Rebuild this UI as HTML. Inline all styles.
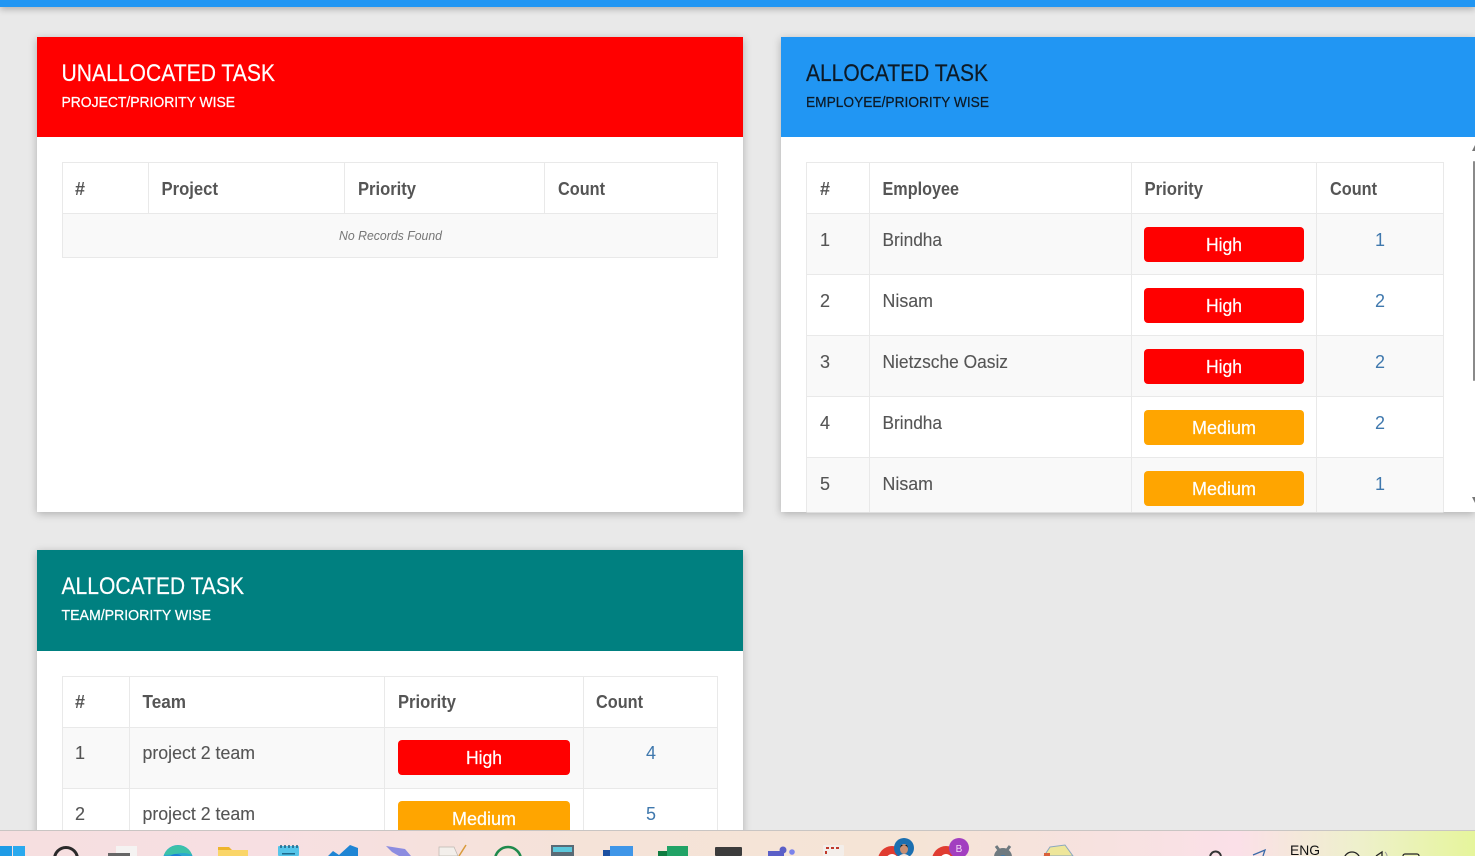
<!DOCTYPE html>
<html>
<head>
<meta charset="utf-8">
<style>
html,body{margin:0;padding:0;width:1475px;height:856px;overflow:hidden;background:#e9e9e9;font-family:"Liberation Sans",sans-serif}
#top{position:absolute;left:0;top:0;width:1475px;height:7px;background:#2196f3;box-shadow:0 2px 7px rgba(0,0,0,.28)}
.card{position:absolute;background:#fff;box-shadow:0 2px 8px rgba(0,0,0,.25)}
#tb{position:absolute;left:0;top:830px;width:1475px;height:26px;border-top:1px solid #c9c5c3;box-sizing:border-box;background:linear-gradient(90deg,#f6dfe0 0%,#f7dfe2 18%,#f5e3d8 40%,#f5e4d6 62%,#f7e2e0 75%,#fbe0e8 84%,#eef0cc 92%,#e6f59c 100%)}
svg{position:absolute;left:0;top:0}
text{font-family:"Liberation Sans",sans-serif}
.th{font-size:18px;font-weight:bold;fill:#555}
.td{font-size:18px;fill:#555;stroke:#555;stroke-width:.12px}
.bt{font-size:18px;fill:#fff;stroke:#fff;stroke-width:.2px}
.lnk{font-size:18px;fill:#3f78ad;text-anchor:middle}
.sub{font-size:15px;stroke-width:.25px}
.ttl{font-size:24.5px;stroke-width:.2px}
</style>
</head>
<body>
<div id="top"></div>
<div class="card" style="left:37px;top:37px;width:706px;height:475px"></div>
<div class="card" style="left:781px;top:37px;width:694px;height:475px"></div>
<div class="card" style="left:37px;top:550px;width:706px;height:290px"></div>

<svg width="1475" height="856" viewBox="0 0 1475 856">
<!-- headers -->
<rect x="37" y="37" width="706" height="100" fill="#ff0000"/>
<rect x="781" y="37" width="694" height="100" fill="#2196f3"/>
<rect x="37" y="550" width="706" height="101" fill="#008080"/>
<g fill="#fff" stroke="#fff">
<text class="ttl" x="61.5" y="81" textLength="213.5" lengthAdjust="spacingAndGlyphs">UNALLOCATED TASK</text>
<text class="sub" x="61.5" y="107" textLength="173.5" lengthAdjust="spacingAndGlyphs">PROJECT/PRIORITY WISE</text>
<text class="ttl" x="61.5" y="594" textLength="182.5" lengthAdjust="spacingAndGlyphs">ALLOCATED TASK</text>
<text class="sub" x="61.5" y="620" textLength="149.5" lengthAdjust="spacingAndGlyphs">TEAM/PRIORITY WISE</text>
</g>
<g fill="#0d1a26" stroke="#0d1a26">
<text class="ttl" x="806" y="81" textLength="182" lengthAdjust="spacingAndGlyphs">ALLOCATED TASK</text>
<text class="sub" x="806" y="107" textLength="183" lengthAdjust="spacingAndGlyphs">EMPLOYEE/PRIORITY WISE</text>
</g>

<!-- table 1 -->
<rect x="62.5" y="213.5" width="655" height="44" fill="#f9f9f9"/>
<g fill="none" stroke="#e9e9e9" stroke-width="1">
<rect x="62.5" y="162.5" width="655" height="95"/>
<path d="M62 213.5H718M148.5 162V213M344.5 162V213M544.5 162V213"/>
</g>
<g>
<text class="th" x="75" y="195" textLength="10" lengthAdjust="spacingAndGlyphs">#</text>
<text class="th" x="161.5" y="195" textLength="56.5" lengthAdjust="spacingAndGlyphs">Project</text>
<text class="th" x="358" y="195" textLength="58" lengthAdjust="spacingAndGlyphs">Priority</text>
<text class="th" x="558" y="195" textLength="47" lengthAdjust="spacingAndGlyphs">Count</text>
</g>
<text x="339" y="240" font-size="13" font-style="italic" fill="#777" textLength="103" lengthAdjust="spacingAndGlyphs">No Records Found</text>

<!-- table 2 -->
<rect x="806.5" y="213.5" width="637" height="61" fill="#f9f9f9"/>
<rect x="806.5" y="335.5" width="637" height="61" fill="#f9f9f9"/>
<rect x="806.5" y="457.5" width="637" height="55" fill="#f9f9f9"/>
<g fill="none" stroke="#e9e9e9" stroke-width="1">
<path d="M806.5 512V162.5H1443.5V512M806 213.5H1444M806 274.5H1444M806 335.5H1444M806 396.5H1444M806 457.5H1444M869.5 162V512M1131.5 162V512M1316.5 162V512"/>
</g>
<g>
<text class="th" x="820" y="195" textLength="10" lengthAdjust="spacingAndGlyphs">#</text>
<text class="th" x="882.5" y="195" textLength="76.5" lengthAdjust="spacingAndGlyphs">Employee</text>
<text class="th" x="1144.5" y="195" textLength="58.5" lengthAdjust="spacingAndGlyphs">Priority</text>
<text class="th" x="1330" y="195" textLength="47" lengthAdjust="spacingAndGlyphs">Count</text>
</g>
<g>
<text class="td" x="820" y="246">1</text><text class="td" x="882.5" y="246" textLength="59.5" lengthAdjust="spacingAndGlyphs">Brindha</text>
<text class="td" x="820" y="307">2</text><text class="td" x="882.5" y="307" textLength="50.5" lengthAdjust="spacingAndGlyphs">Nisam</text>
<text class="td" x="820" y="368">3</text><text class="td" x="882.5" y="368" textLength="125.5" lengthAdjust="spacingAndGlyphs">Nietzsche Oasiz</text>
<text class="td" x="820" y="429">4</text><text class="td" x="882.5" y="429" textLength="59.5" lengthAdjust="spacingAndGlyphs">Brindha</text>
<text class="td" x="820" y="490">5</text><text class="td" x="882.5" y="490" textLength="50.5" lengthAdjust="spacingAndGlyphs">Nisam</text>
</g>
<rect x="1144" y="227" width="160" height="35" rx="4" fill="#ff0000"/>
<rect x="1144" y="288" width="160" height="35" rx="4" fill="#ff0000"/>
<rect x="1144" y="349" width="160" height="35" rx="4" fill="#ff0000"/>
<rect x="1144" y="410" width="160" height="35" rx="4" fill="#ffa500"/>
<rect x="1144" y="471" width="160" height="35" rx="4" fill="#ffa500"/>
<g>
<text class="bt" x="1206" y="251" textLength="36" lengthAdjust="spacingAndGlyphs">High</text>
<text class="bt" x="1206" y="312" textLength="36" lengthAdjust="spacingAndGlyphs">High</text>
<text class="bt" x="1206" y="373" textLength="36" lengthAdjust="spacingAndGlyphs">High</text>
<text class="bt" x="1192" y="434" textLength="64" lengthAdjust="spacingAndGlyphs">Medium</text>
<text class="bt" x="1192" y="495" textLength="64" lengthAdjust="spacingAndGlyphs">Medium</text>
</g>
<g>
<text class="lnk" x="1380" y="246">1</text><text class="lnk" x="1380" y="307">2</text><text class="lnk" x="1380" y="368">2</text><text class="lnk" x="1380" y="429">2</text><text class="lnk" x="1380" y="490">1</text>
</g>
<!-- scrollbar -->
<rect x="1473" y="161" width="2" height="220" rx="1" fill="#8a8a8a"/>
<path d="M1475 145L1472 151H1475Z" fill="#777"/>
<path d="M1472 497L1475 503V497Z" fill="#777"/>

<!-- table 3 -->
<rect x="62.5" y="727.5" width="655" height="61" fill="#f9f9f9"/>
<g fill="none" stroke="#e9e9e9" stroke-width="1">
<path d="M62.5 840V676.5H717.5V840M62 727.5H718M62 788.5H718M129.5 676V840M384.5 676V840M583.5 676V840"/>
</g>
<g>
<text class="th" x="75" y="708" textLength="10" lengthAdjust="spacingAndGlyphs">#</text>
<text class="th" x="142.5" y="708" textLength="43.5" lengthAdjust="spacingAndGlyphs">Team</text>
<text class="th" x="398" y="708" textLength="58" lengthAdjust="spacingAndGlyphs">Priority</text>
<text class="th" x="596" y="708" textLength="47" lengthAdjust="spacingAndGlyphs">Count</text>
</g>
<g>
<text class="td" x="75" y="759">1</text><text class="td" x="142.5" y="759" textLength="112.5" lengthAdjust="spacingAndGlyphs">project 2 team</text>
<text class="td" x="75" y="820">2</text><text class="td" x="142.5" y="820" textLength="112.5" lengthAdjust="spacingAndGlyphs">project 2 team</text>
</g>
<rect x="398" y="740" width="172" height="35" rx="4" fill="#ff0000"/>
<rect x="398" y="801" width="172" height="35" rx="4" fill="#ffa500"/>
<g>
<text class="bt" x="466" y="764" textLength="36" lengthAdjust="spacingAndGlyphs">High</text>
<text class="bt" x="452" y="825" textLength="64" lengthAdjust="spacingAndGlyphs">Medium</text>
</g>
<g>
<text class="lnk" x="651" y="759">4</text><text class="lnk" x="651" y="820">5</text>
</g>
</svg>

<div id="tb"></div>
<svg width="1475" height="856" viewBox="0 0 1475 856">
<!-- start -->
<rect x="0" y="846" width="12" height="10" fill="#1f9be6"/><rect x="13" y="846" width="12" height="10" fill="#2aa9ee"/>
<!-- search -->
<circle cx="66" cy="859" r="11.5" fill="none" stroke="#2a2a2a" stroke-width="3"/>
<!-- widget -->
<rect x="116" y="846" width="21" height="10" fill="#f5f3f2"/><rect x="108" y="853" width="22" height="3" fill="#666"/>
<!-- edge -->
<circle cx="178" cy="860" r="15" fill="#2aa8d0"/><path d="M164 855a15 15 0 0 1 28 0q-7-3-14-1.5t-14 1.5z" fill="#3cc2a8"/><circle cx="176" cy="863" r="9" fill="#1c7fd6"/>
<!-- folder -->
<path d="M218 856V847H229L232 850H248V856Z" fill="#eeb52c"/><rect x="218" y="850" width="30" height="6" fill="#fad568"/>
<!-- notepad -->
<rect x="278" y="846" width="21" height="10" rx="1" fill="#55c5ea"/><path d="M281 845v3M285 845v3M289 845v3M293 845v3M297 845v3" stroke="#1c5f80" stroke-width="1.5"/><rect x="282" y="853" width="13" height="1.5" fill="#1c6a8e"/>
<!-- vscode -->
<path d="M328 856L333 851L339 855L350 845L358 848V856Z" fill="#1f85d4"/>
<!-- app -->
<path d="M386 846L405 849L411 856H399L392 852Z" fill="#8c8ce0"/>
<!-- doc -->
<path d="M439 847H454L458 856H439Z" fill="#f3efeb" stroke="#bdb6b0" stroke-width=".7"/><path d="M459 856L466 845" stroke="#d99a3a" stroke-width="1.5"/>
<!-- circle green -->
<circle cx="508" cy="860" r="13" fill="none" stroke="#1f8a4c" stroke-width="2.5"/>
<!-- calc -->
<rect x="551" y="845" width="23" height="11" fill="#5a6a75"/><rect x="553" y="847" width="19" height="5" fill="#5cc8dc"/>
<!-- blue -->
<rect x="603" y="850" width="12" height="6" fill="#1a4fa0"/><rect x="610" y="846" width="23" height="10" fill="#3f96e8"/>
<!-- excel -->
<rect x="658" y="851" width="12" height="5" fill="#107c41"/><rect x="667" y="846" width="21" height="10" fill="#21a366"/>
<!-- dark -->
<rect x="715" y="847" width="27" height="9" rx="1" fill="#3c3c3c"/>
<!-- teams -->
<path d="M768 851H784V856H768Z" fill="#5b5fc7"/><circle cx="783" cy="850" r="3.5" fill="#5b5fc7"/><circle cx="792" cy="852" r="2.8" fill="#7b83eb"/>
<!-- snip -->
<rect x="823" y="845" width="21" height="11" rx="1" fill="#f3eeea"/><path d="M826 848h3m2 0h3m2 0h3M826 851v3" stroke="#c0392b" stroke-width="2"/>
<!-- chrome 1 -->
<circle cx="892" cy="860" r="14" fill="#e03c31"/><circle cx="892" cy="860" r="5" fill="#4a90e2" stroke="#fff" stroke-width="2"/>
<circle cx="904" cy="848" r="10" fill="#1c6fb0"/><ellipse cx="904" cy="849" rx="4" ry="5" fill="#c99074"/><path d="M899 856q5-4 10 0z" fill="#f3e4dc"/><path d="M900 848q4-6 8 0l-1-3h-6z" fill="#1a1a1a"/>
<!-- chrome 2 -->
<circle cx="946" cy="860" r="14" fill="#e03c31"/><circle cx="946" cy="860" r="5" fill="#4a90e2" stroke="#fff" stroke-width="2"/>
<circle cx="959" cy="848" r="10" fill="#a23fc0"/><text x="959" y="852" font-size="10" fill="#f3d9f7" text-anchor="middle">B</text>
<!-- gear -->
<circle cx="1003" cy="857" r="9" fill="#6f7a80"/><path d="M996 846l3 4M1010 846l-3 4" stroke="#6f7a80" stroke-width="3"/><circle cx="1003" cy="859" r="4" fill="#3f7cb0"/>
<!-- file -->
<path d="M1050 847L1065 845L1073 856H1044Z" fill="#eee69a" stroke="#8aa7c0" stroke-width="1"/><rect x="1044" y="853" width="6" height="3" fill="#d9603a"/>
<!-- tray -->
<path d="M1210 856q2-5 6-4.500t5 4.500" fill="none" stroke="#333" stroke-width="2"/>
<path d="M1253 855L1265 850L1263 856" fill="none" stroke="#3a6aa8" stroke-width="1.3"/>
<text x="1290" y="855" font-size="14" fill="#111" textLength="30" lengthAdjust="spacingAndGlyphs">ENG</text>
<circle cx="1352" cy="860" r="8" fill="none" stroke="#222" stroke-width="1.3"/>
<path d="M1376 856L1382 852V856" fill="none" stroke="#222" stroke-width="1.3"/><path d="M1385 852q2 2 2 4" fill="none" stroke="#999" stroke-width="1"/>
<rect x="1403" y="854" width="16" height="8" rx="2" fill="none" stroke="#222" stroke-width="1.3"/>
</svg>
</body>
</html>
